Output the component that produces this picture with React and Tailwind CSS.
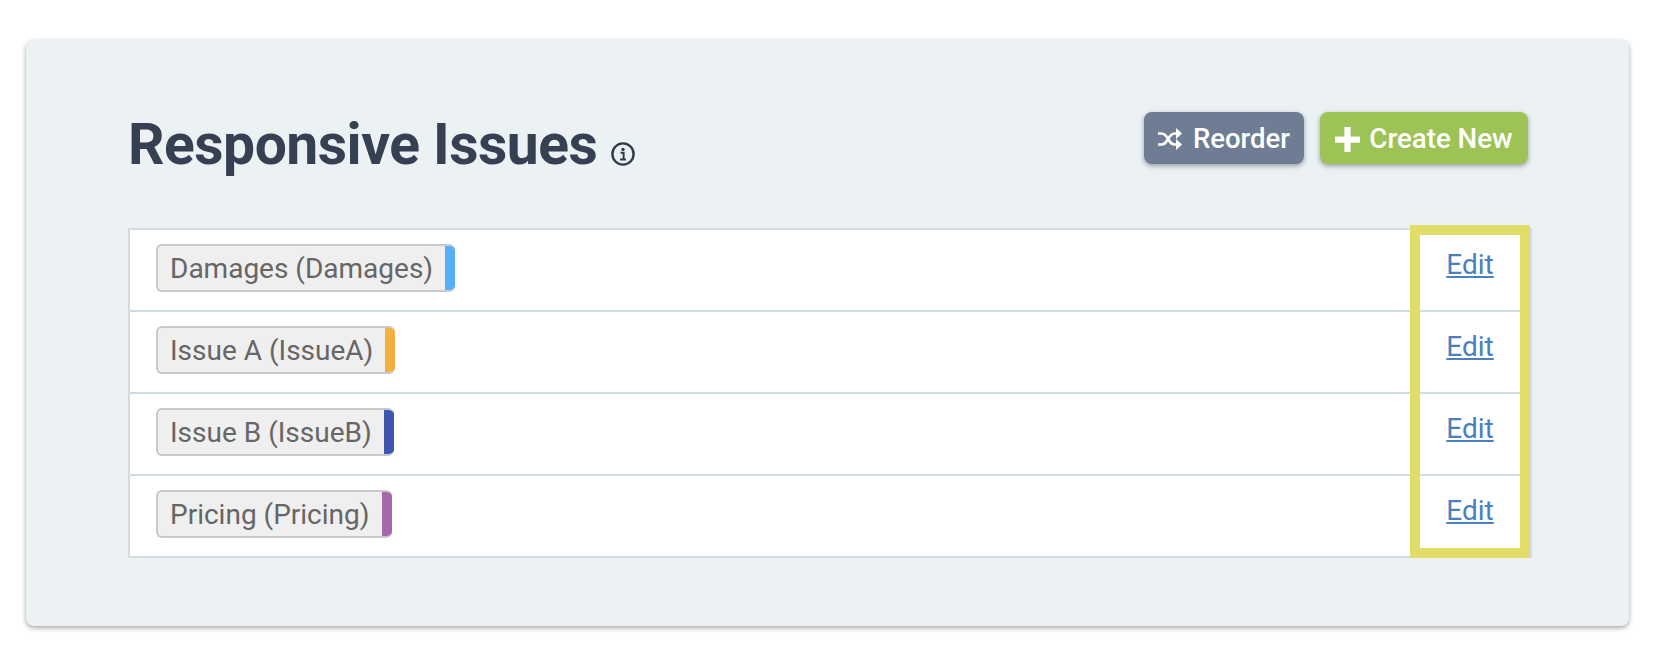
const rows = [
  { label: "Damages (Damages)", color: "bg-[#56aef5]" },
  { label: "Issue A (IssueA)", color: "bg-[#f5b13d]" },
  { label: "Issue B (IssueB)", color: "bg-[#3f55b0]" },
  { label: "Pricing (Pricing)", color: "bg-[#a569ab]" },
];

const InfoIcon = () => (
  <svg width="24" height="24" viewBox="0 0 24 24" fill="none" className="text-[#2f3b4c]">
    <circle cx="12" cy="12" r="10.6" stroke="currentColor" strokeWidth="2.4" />
    <circle cx="12" cy="7.4" r="1.7" fill="currentColor" />
    <path d="M9.6 10.8h3v6.4M9 17.4h6" stroke="currentColor" strokeWidth="2" />
  </svg>
);

const ShuffleIcon = () => (
  <svg width="24" height="22" viewBox="0 0 24 22" fill="none">
    <path
      d="M0 5.5h3.5c3.2 0 5 2.6 6.6 5.5s3.4 5.5 6.6 5.5h2.8M0 16.5h3.5c3.2 0 5-2.6 6.6-5.5s3.4-5.5 6.6-5.5h2.8"
      stroke="currentColor"
      strokeWidth="2.6"
    />
    <path d="M18 0l6 5.5-6 5.5zM18 11l6 5.5-6 5.5z" fill="currentColor" />
  </svg>
);

export default function App() {
  return (
    <div className="min-h-[658px] bg-white px-[26px] pt-[40px] font-['Roboto',sans-serif]">
      <div className="h-[586px] w-[1603px] rounded-lg bg-[#ecf1f4] pt-[72px] pr-[97px] pl-[102px] shadow-[0_2px_5px_rgba(0,0,0,0.35)]">
        <div className="flex h-[116px] items-start justify-between pr-[4px]">
          <h1 className="flex items-center gap-[14px] pt-[1px] text-[57px] leading-[64px] font-bold tracking-[-0.5px] text-[#354052]">
            Responsive Issues
            <span className="mt-[17px]">
              <InfoIcon />
            </span>
          </h1>
          <div className="-mt-[1px] flex gap-4 pt-[1px]">
            <button className="flex h-[52px] w-[160px] items-center justify-center gap-[11px] rounded-lg bg-[#6f7d94] pt-[2px] text-[27.5px] font-medium text-white shadow-[0_2px_5px_rgba(0,0,0,0.35)]">
              <ShuffleIcon />
              Reorder
            </button>
            <button className="flex h-[52px] w-[208px] items-center justify-center gap-[9px] rounded-lg bg-[#9dc356] pt-[2px] text-[27.7px] font-medium text-white shadow-[0_2px_5px_rgba(0,0,0,0.35)]">
              <svg width="25" height="25" viewBox="0 0 24 24" fill="currentColor">
                <path d="M9 0h6v9h9v6h-9v9H9v-9H0V9h9z" />
              </svg>
              Create New
            </button>
          </div>
        </div>
        <div className="relative border-2 border-[#d3dbe3] bg-white">
          {rows.map((row, i) => (
            <div
              key={row.label}
              className={
                i < rows.length - 1
                  ? "flex h-[82px] items-center border-b-2 border-[#d3dbe3] pb-1 pl-[26px]"
                  : "flex h-[80px] items-center pb-1 pl-[26px]"
              }
            >
              <span className="flex h-[48px] items-stretch overflow-hidden rounded-md border-2 border-r-0 border-[#c9c9c9] bg-[#efefef]">
                <span className="flex items-center px-3 pt-[2px] text-[28px] text-[#666666]">{row.label}</span>
                <span className={`-my-[2px] w-[10px] ${row.color}`} />
              </span>
              <a href="#" className="mr-[10px] ml-auto w-[100px] pb-[6px] text-center text-[28px] text-[#4a80bf] underline">
                Edit
              </a>
            </div>
          ))}
          <div className="pointer-events-none absolute top-[-5px] right-0 bottom-[-2px] w-[120px] border-[10px] border-[#e0dd68]" />
        </div>
      </div>
    </div>
  );
}
